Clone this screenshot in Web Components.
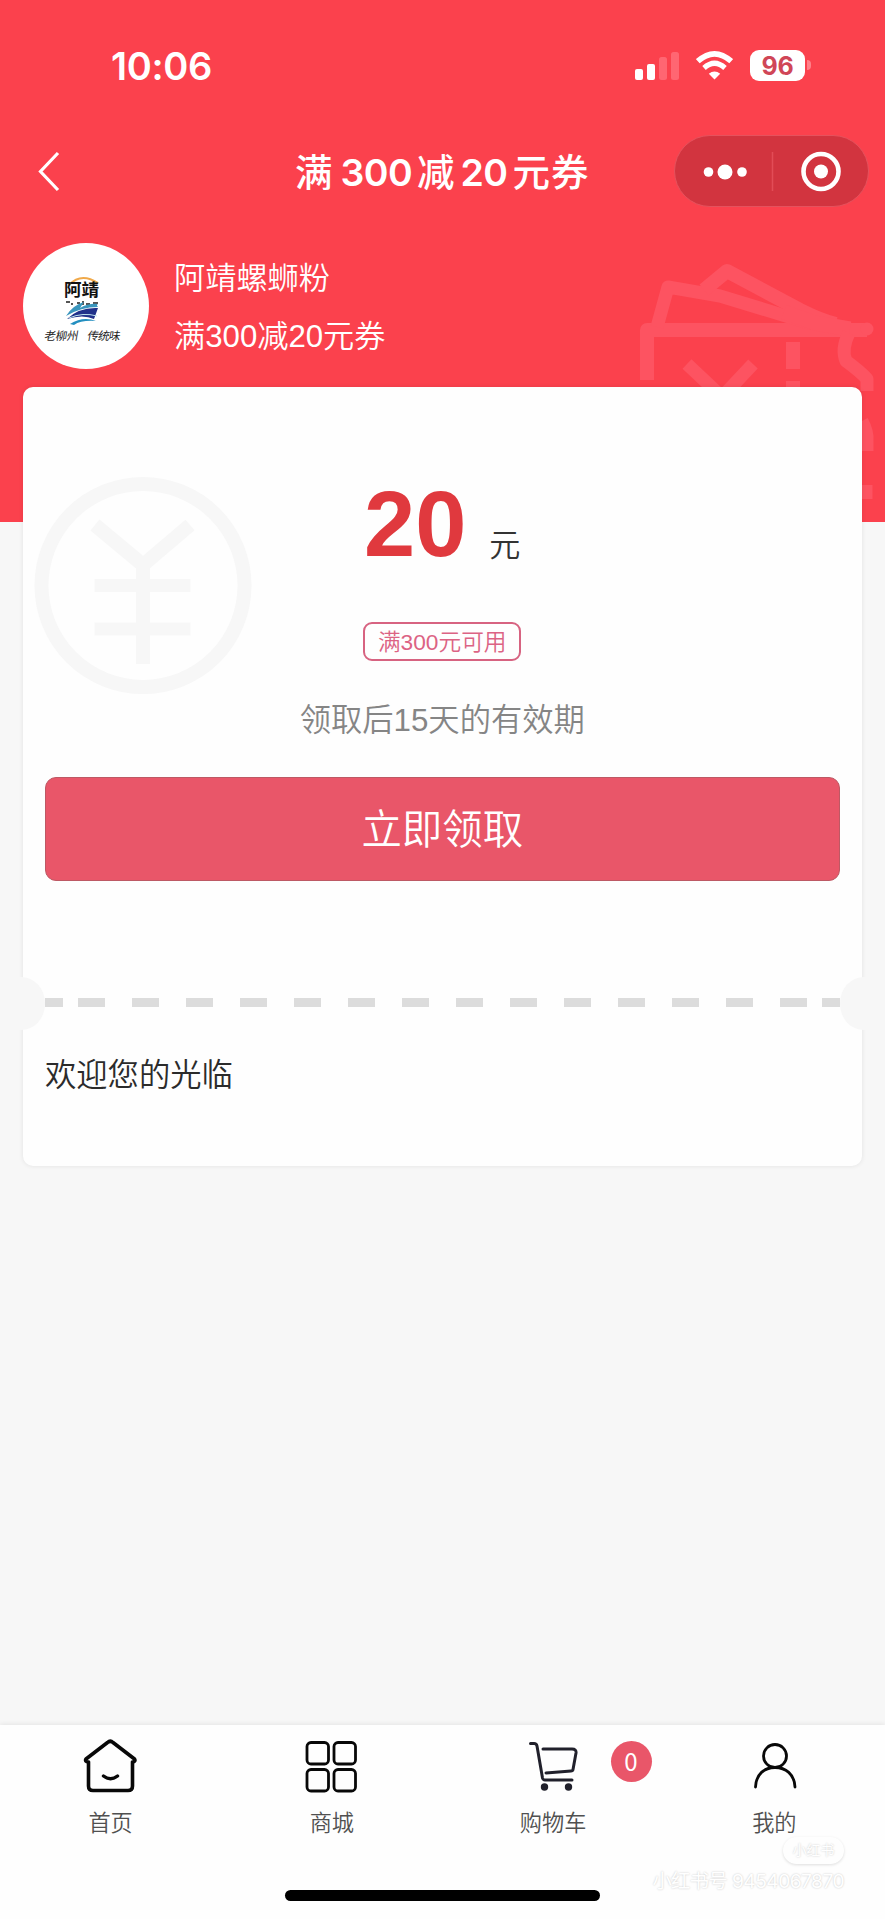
<!DOCTYPE html>
<html lang="zh-CN">
<head>
<meta charset="utf-8">
<title>满300减20元券</title>
<style>
html,body{margin:0;padding:0}
body{width:885px;height:1919px;overflow:hidden;background:#f7f7f7;font-family:"Liberation Sans","Noto Sans CJK SC",sans-serif;font-weight:350}
</style>
</head>
<body>
<coupon-page></coupon-page>
<script>
const define = (name, html) => {
  const t = document.createElement('template');
  t.innerHTML = html;
  customElements.define(name, class extends HTMLElement {
    constructor() {
      super();
      this.attachShadow({mode: 'open'}).appendChild(t.content.cloneNode(true));
    }
  });
};

define('status-bar', `
<style>
:host{display:flex;height:108px;box-sizing:border-box;padding:42px 74px 0 111px;justify-content:space-between;align-items:flex-start;color:#fff}
.time{font:600 38px/48px Inter,sans-serif;letter-spacing:-.3px}
.icons{display:flex;padding-top:8px}
.signal{margin-right:17px}.wifi{margin-right:17px}
.battery{width:55px;height:31px;border-radius:9px;background:#fff;color:#d04657;font:700 25px/32px Inter,sans-serif;text-align:center;letter-spacing:-.3px}
.nub{width:4px;height:10px;margin:10px 0 0 2px;border-radius:0 4px 4px 0;background:#ff8089}
svg{display:block}
</style>
<div class="time">10:06</div>
<div class="icons">
<svg class="signal" width="44" height="31" fill="#fff"><rect y="19" width="8" height="11" rx="2"/><rect x="12" y="14" width="8" height="16" rx="2"/><g fill="#ff6672"><rect x="24" y="7" width="8" height="23" rx="2.5"/><rect x="36" y="2" width="8" height="28" rx="2.5"/></g></svg>
<svg class="wifi" width="37" height="31" fill="none" stroke="#fff"><path d="M1.8 11.200Q18.500-3.600 35.200 11.200" stroke-width="5.600"/><path d="M8 18Q18.500 8.500 29 18" stroke-width="5.200"/><path d="M18.500 29.500L12.800 23.800Q18.500 19.200 24.200 23.800Z" fill="#fff" stroke="none"/></svg>
<div class="battery">96</div><div class="nub"></div>
</div>`);

define('nav-bar', `
<style>
:host{display:grid;grid-template-columns:296px 1fr 211px;height:126px;align-items:start;color:#fff}
.back{margin:43px 0 0 37px}
h1{margin:37px 0 0 -1px;font:500 37.500px/56px Inter,"Noto Sans CJK SC",sans-serif;white-space:nowrap;letter-spacing:1px}
h1 b{font-weight:600;margin:0 5px 0 7px;letter-spacing:-.6px}
h1 b+b{margin-left:5px}
.capsule{margin:27px 0 0;width:195px;height:71.500px;box-sizing:border-box;border-radius:36px;background:#d2343f;border:1px solid #e5525d}
svg{display:block}
</style>
<svg class="back" width="24" height="42" fill="none" stroke="#fff" stroke-width="3.200"><path d="M21 2L3.500 20.500L21 39"/></svg>
<h1>满<b>300</b>减<b>20</b>元券</h1>
<div class="capsule"><svg width="193" height="69" fill="#fff"><circle cx="33.500" cy="36" r="4.800"/><circle cx="50" cy="36" r="7.500"/><circle cx="67" cy="36" r="4.800"/><path d="M97.500 16v39" stroke="#e24c57" stroke-width="1.500"/><circle cx="146" cy="35.500" r="17.500" fill="none" stroke="#fff" stroke-width="4.600"/><circle cx="146" cy="35.500" r="7"/></svg></div>`);

define('shop-logo', `
<style>:host{display:block;width:126px;height:126px;border-radius:50%;background:#fff;overflow:hidden}svg{display:block}</style>
<svg width="126" height="126" fill="none">
<path d="M46 42Q58 29 75 40" stroke="#f0a94a" stroke-width="2"/>
<text x="41" y="53" font-family="Noto Sans CJK SC" font-size="17.500" font-weight="700" fill="#111">阿靖</text>
<g fill="#555"><path d="M43 58h4v2h-4zM48 60h2v2h-2zM54 59h3v2h-3zM59 58h2v4h-2zM63 60h4v2h-4zM70 59h5v2h-5z"/></g>
<path d="M43 73Q50 62 61 59L57 65Q66 60 75 61Q73 62 75 64Q58 64 43 73Z" fill="#3a96bd"/>
<path d="M44 76Q56 64 75 65L71 76Q60 71 44 76Z" fill="#20318a"/>
<path d="M46 75Q60 69 74 73" stroke="#bfe3ee" stroke-width="1"/>
<path d="M47 81Q60 73 73 78Q58 77 51 82Z" fill="#238fc0"/>
<g font-family="Noto Sans CJK SC" font-size="11.500" font-weight="400" fill="#222" transform="skewX(-10)"><text x="38" y="97.500" textLength="34">老柳州</text><text x="81" y="97.500" textLength="33">传统味</text></g>
</svg>`);

define('shop-header', `
<style>
:host{display:flex;height:153px;box-sizing:border-box;padding:9px 0 0 22.500px;position:relative;color:#fff}
.text{margin-left:25.500px;padding-top:13px;font-size:31.200px;line-height:46px}
.text div+div{margin-top:12px}
.ticket{position:absolute;left:636px;top:27px}
</style>
<svg class="ticket" width="249" height="261" viewBox="636 260 249 261" fill="none" stroke="#fd5361" stroke-width="13" stroke-linejoin="round">
<path d="M647 379V329H867" stroke-width="14"/><path d="M657 326L668 286L720 295L812 323"/><path d="M704 289L727 270L800 309Q822 320 836 323" stroke-width="14"/><path d="M784 311L815 322L850 328" stroke-width="15"/><circle cx="867" cy="328" r="6.500" fill="#fd5361" stroke="none"/>
<path d="M849 332Q841 348 846 360Q861 371 867 378L867 390"/><path d="M793 341v27M793 380v60" stroke-width="14"/><path d="M687 363L722 396L753 363"/>
<path d="M862 420Q868 431 867 440V450M866 484v14"/>
</svg>
<shop-logo></shop-logo>
<div class="text"><div>阿靖螺蛳粉</div><div>满300减20元券</div></div>`);

define('claim-button', `
<style>
:host{display:block}
button{display:block;width:100%;height:104px;box-sizing:border-box;padding:2px 0 0;border:1px solid #bd5964;border-radius:11px;background:#e95669;color:#fff;font:inherit;font-size:40.400px;line-height:60px}
</style><button><slot></slot></button>`);

define('coupon-card', `
<style>
:host{display:block;position:relative;margin:0 23px 0 22.500px;height:779px;border-radius:10px;background:#fefefe;box-shadow:0 0 5px rgba(0,0,0,.09)}
.body{height:610px;box-sizing:border-box;padding:85px 22.500px 0;text-align:center}
.amount{height:119px;line-height:104px;color:#333;font-size:31.100px;white-space:nowrap;position:relative}
.amount b{font:700 92px/104px "Liberation Sans",sans-serif;color:#e0393e;margin-right:23px}
.tag{display:block;width:158px;height:39px;box-sizing:border-box;margin:31px auto 0;border:2px solid #d76381;border-radius:9px;color:#dc6384;font-size:22.700px;line-height:36px}
.valid{margin:35px 0 32px;height:49px;line-height:50px;font-size:31.300px;color:#858585}
.yen{position:absolute;left:11px;top:89px}
.tear{height:9px;margin:1px 22.500px 0;display:grid;grid-template-columns:18px 1fr 18px;column-gap:15px}
.tear i{background:#dcdcdc}
.tear i:nth-child(2){background:repeating-linear-gradient(90deg,#dcdcdc 0 27px,transparent 27px 54px)}
.notch{position:absolute;top:590px;width:28px;height:53px;background:#f7f7f7}
.l{left:-6px;border-radius:0 24px 24px 0/0 26px 26px 0}
.r{right:-6px;border-radius:24px 0 0 24px/26px 0 0 26px}
.note{margin:45px 22.500px 0;line-height:48px;font-size:31.300px;color:#2b2b2b}
</style>
<div class="body">
<svg class="yen" width="220" height="220" fill="none" stroke="#f7f7f7" stroke-width="14"><circle cx="109" cy="109.500" r="101.500"/><path d="M61 49L109 89L156 49M109 88V188" stroke-linejoin="round"/><path d="M60.500 109.500h96M60.500 153h96" stroke-width="13"/></svg>
<div class="amount"><b>20</b>元</div>
<span class="tag">满300元可用</span>
<div class="valid">领取后15天的有效期</div>
<claim-button>立即领取</claim-button>
</div>
<div class="tear"><i></i><i></i><i></i></div>
<div class="notch l"></div><div class="notch r"></div>
<div class="note"><slot></slot></div>`);

define('tab-item', `
<style>
:host{display:block;position:relative;text-align:center;color:#505050;font-size:22.200px;line-height:32px}
.icon{display:flex;height:56px;justify-content:center;margin:13px 0 14px}
</style><div class="icon"><slot name="icon"></slot></div><slot></slot><slot name="badge"></slot>`);

define('tab-bar', `
<style>
:host{display:block;position:relative;height:194px;background:#fefefe;box-shadow:0 -1px 5px rgba(0,0,0,.08)}
.tabs{display:grid;grid-template-columns:repeat(4,1fr);height:164.500px}
svg{display:block;width:56px;height:56px;margin-left:-1px;fill:none;stroke:#080808;stroke-linecap:round;stroke-linejoin:round}
.badge{position:absolute;left:168px;top:15.500px;width:41px;height:41px;border-radius:50%;background:#e95669;color:#fff;font:400 24px/39px "Noto Sans CJK SC",sans-serif}
.home{width:315px;height:11px;margin:0 auto;border-radius:6px;background:#000}
.mark{position:absolute;right:41px;top:112px;display:flex;flex-direction:column;align-items:flex-end;color:#fff;text-shadow:0 0 2px #c4c4c4;font-weight:400}
.pill{width:61px;height:27px;border-radius:14px;box-shadow:0 1px 3px #dedede;text-align:center;font-size:14px;line-height:27px}
.id{margin-top:4px;font:400 19.300px/26px Inter,"Noto Sans CJK SC",sans-serif;letter-spacing:-.6px;white-space:nowrap}
</style>
<div class="tabs">
<tab-item><svg slot="icon" stroke-width="3.600"><path d="M6.500 24V48Q6.500 52.500 11 52.500H46Q50.500 52.500 50.500 48V24M6.500 24Q2.500 23.500 4 21L25.500 4.500Q28.300 2 31 4.500L52.500 21Q54 23.500 50.500 24"/><path d="M21.500 38Q28.500 43.500 35.500 38" stroke-width="3.400"/></svg>首页</tab-item>
<tab-item><svg slot="icon" stroke-width="2.800"><rect x="4" y="4.500" width="21.500" height="21.500" rx="4"/><rect x="31" y="4.500" width="21.500" height="21.500" rx="4"/><rect x="4" y="31.500" width="21.500" height="21.500" rx="4"/><rect x="31" y="31.500" width="21.500" height="21.500" rx="4"/></svg>商城</tab-item>
<tab-item><svg slot="icon" stroke-width="3" style="stroke:#20202b"><path d="M5.500 5.500H9Q11.500 5.500 12 8L17.500 40Q18 42 20 42H47M18 11H47Q51.500 11 51 15L48 31.500Q47.700 33 46 33L21 35"/><g fill="#20202b" stroke="none"><circle cx="19.500" cy="49" r="3.700"/><circle cx="43.500" cy="49" r="3.700"/></g></svg>购物车<span slot="badge" class="badge">0</span></tab-item>
<tab-item><svg slot="icon" stroke-width="2.800"><circle cx="29" cy="18" r="11.500"/><path d="M9.500 49C10 36 18.500 29.500 29 29.500S48.500 36 49 49"/></svg>我的</tab-item>
</div>
<div class="home"></div>
<div class="mark"><div class="pill">小红书</div><div class="id">小红书号 9454067870</div></div>`);

define('coupon-page', `
<style>
:host{display:flex;flex-direction:column;height:1919px;background:linear-gradient(#fb414d 0 522px,#f7f7f7 522px)}
.space{flex:1}
</style>
<status-bar></status-bar><nav-bar></nav-bar><shop-header></shop-header>
<coupon-card>欢迎您的光临</coupon-card>
<div class="space"></div><tab-bar></tab-bar>`);
</script>
</body>
</html>
